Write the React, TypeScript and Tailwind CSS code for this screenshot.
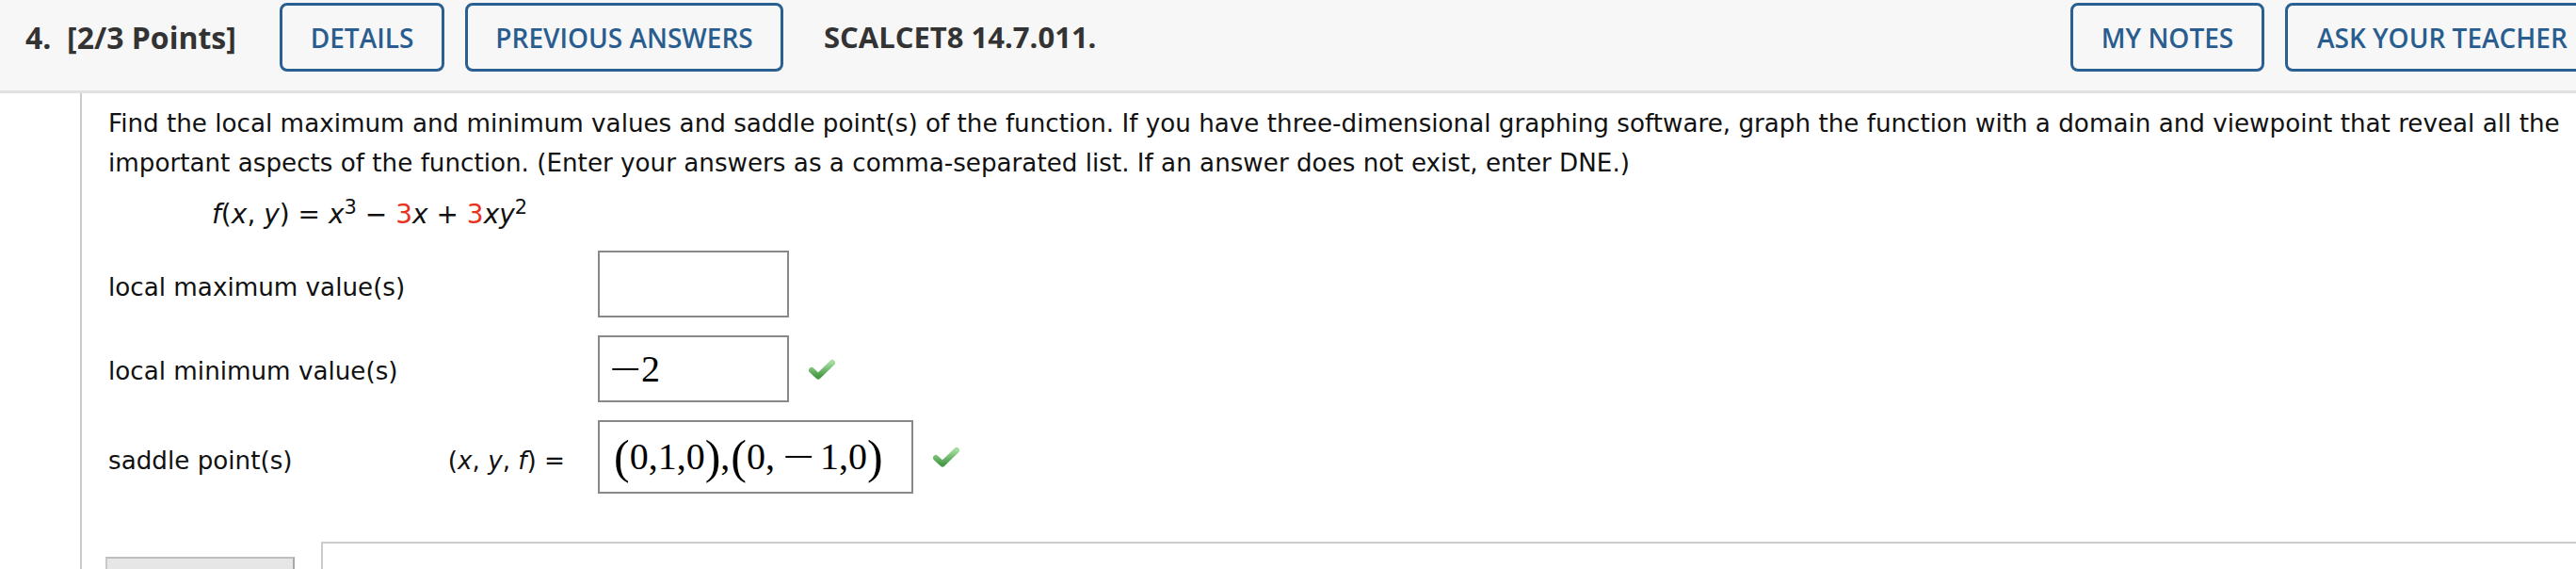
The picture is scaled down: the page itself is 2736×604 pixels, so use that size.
import React from "react";

function Check({ id }: { id: string }) {
  return (
    <svg width="32" height="24" viewBox="0 0 32 24" className="shrink-0">
      <defs>
        <linearGradient id={id} x1="0" y1="0" x2="0" y2="1">
          <stop offset="0" stopColor="#a3dc9c" />
          <stop offset="1" stopColor="#479a47" />
        </linearGradient>
      </defs>
      <path
        d="M5 13 L12 19.5 L27 5"
        fill="none"
        stroke={`url(#${id})`}
        strokeWidth="6"
        strokeLinecap="round"
        strokeLinejoin="round"
      />
    </svg>
  );
}

function Minus() {
  return (
    <span className="inline-block w-[30px] text-center">
      <span className="inline-block scale-x-150">−</span>
    </span>
  );
}

const btn =
  "h-[73px] border-[3px] border-[#2a5f91] rounded-[8px] text-[#2a5d8f] text-[28px] font-semibold shrink-0 bg-transparent";

export default function App() {
  return (
    <div className="w-[2736px] h-[604px] overflow-hidden bg-white">
      <header className="h-[99px] w-[2767px] bg-[#f7f7f7] border-b-[3px] border-[#e1e1e1] flex justify-between pt-[3px] font-['Open_Sans',sans-serif]">
        <div className="flex items-start">
          <div className="ml-[27px] w-[270px] h-[73px] flex items-center text-[32px] font-bold text-[#333] whitespace-pre">
            4.  [2/3 Points]
          </div>
          <button className={`${btn} w-[175px]`}>DETAILS</button>
          <button className={`${btn} ml-[22px] w-[338px]`}>PREVIOUS ANSWERS</button>
          <div className="ml-[43px] h-[73px] flex items-center text-[31px] font-bold text-[#333]">
            SCALCET8 14.7.011.
          </div>
        </div>
        <div className="flex items-start gap-[22px]">
          <button className={`${btn} w-[206px]`}>MY NOTES</button>
          <button className={`${btn} w-[340px] text-left pl-[31px]`}>ASK YOUR TEACHER</button>
        </div>
      </header>

      <div className="flex h-[505px]">
        <div className="w-[85px] shrink-0" />
        <div className="border-l-2 border-[#cccccc] flex-1 pl-[28px] pt-[11px] font-['DejaVu_Sans','Liberation_Sans',sans-serif] text-[26.2px] leading-[42px] text-[#111]">
          <p className="whitespace-nowrap">
            Find the local maximum and minimum values and saddle point(s) of the function. If you have three-dimensional graphing software, graph the function with a domain and viewpoint that reveal all the
            <br />
            important aspects of the function. (Enter your answers as a comma-separated list. If an answer does not exist, enter DNE.)
          </p>
          <div className="ml-[110px] mt-[13px] whitespace-nowrap text-[28px]">
            <i>f</i>(<i>x</i>, <i>y</i>) = <i>x</i>
            <sup>3</sup> − <span className="text-[#e8321e]">3</span>
            <i>x</i> + <span className="text-[#e8321e]">3</span>
            <i>xy</i>
            <sup>2</sup>
          </div>

          <div className="mt-[17px] flex items-center">
            <div className="w-[520px] shrink-0 pt-[6px]">local maximum value(s)</div>
            <div className="w-[203px] h-[71px] border-2 border-[#888]" />
          </div>

          <div className="mt-[19px] flex items-center">
            <div className="w-[520px] shrink-0 pt-[5px]">local minimum value(s)</div>
            <div className="w-[203px] h-[71px] border-2 border-[#888] flex items-center pl-[12px] font-['Liberation_Serif',serif] text-[40px] leading-none text-black whitespace-nowrap">
              <Minus />
              <span className="ml-[2px]">2</span>
            </div>
            <div className="ml-[19px]">
              <Check id="c1" />
            </div>
          </div>

          <div className="mt-[19px] flex items-center">
            <div className="w-[520px] shrink-0 flex justify-between pr-[35px] pt-[8px]">
              <span>saddle point(s)</span>
              <span>
                (<i>x</i>, <i>y</i>, <i>f</i>) =
              </span>
            </div>
            <div className="w-[335px] h-[78px] border-2 border-[#888] flex items-center pl-[15px] font-['Liberation_Serif',serif] text-[40px] leading-none text-black whitespace-nowrap">
              <span className="text-[50px]">(</span>0,1,0<span className="text-[50px]">)</span>,<span className="ml-[1px] text-[50px]">(</span>0,<span className="ml-[10px] mr-[8px]"><Minus /></span>1,0<span className="text-[50px]">)</span>
            </div>
            <div className="ml-[19px]">
              <Check id="c2" />
            </div>
          </div>

          <div className="mt-[51px] flex items-start">
            <div className="ml-[-3px] mt-[16px] w-[201px] h-[40px] bg-[#e6e6e6] border-t-2 border-l-2 border-r-2 border-t-[#bdbdbd] border-l-[#c8c8c8] border-r-[#a8a8a8]" />
            <div className="ml-[28px] flex-1 h-[60px] border-2 border-[#cccccc] border-r-0" />
          </div>
        </div>
      </div>
    </div>
  );
}
